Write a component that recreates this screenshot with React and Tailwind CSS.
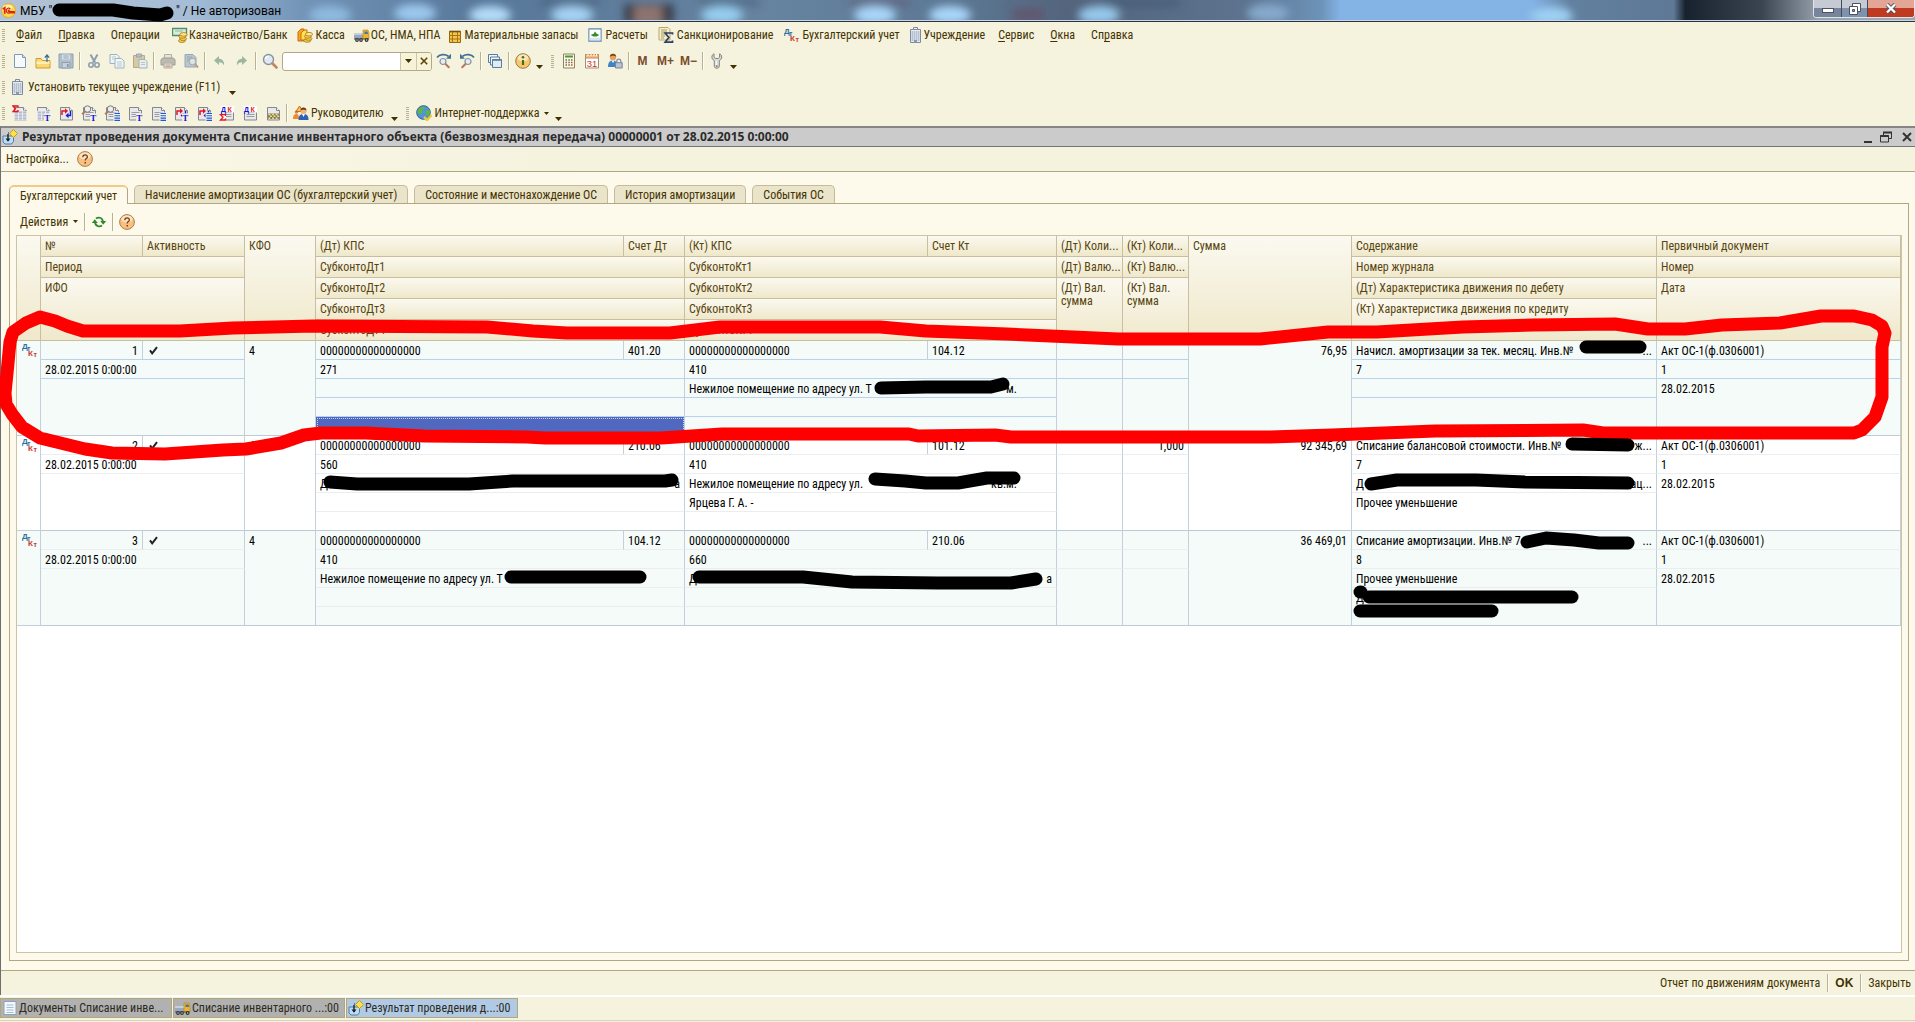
import React from "react";

const UI_FONT = "font-['Roboto_Condensed','Liberation_Sans',sans-serif]";

/* ---------- Иконки ---------- */

function Icon({ children, className = "h-4 w-4", box = "0 0 16 16" }) {
  return (
    <svg viewBox={box} className={`shrink-0 ${className}`} fill="none" aria-hidden="true">
      {children}
    </svg>
  );
}

function Logo1C() {
  return (
    <Icon className="h-[15px] w-[15px]">
      <circle cx="8" cy="8" r="7.5" fill="#fbd94b" stroke="#e0a92a" />
      <ellipse cx="7" cy="4.5" rx="5" ry="2.6" fill="#fff2a8" />
      <path d="M2 6.5 4 5v6.500" stroke="#d8231b" strokeWidth="1.8" />
      <path d="M10 6.2A2.6 2.6 0 1 0 9 10.6h6M9.4 8.2a.8.8 0 1 0-.6 1h6" stroke="#d8231b" strokeWidth="1.3" />
    </Icon>
  );
}

function Coins({ x = 6, y = 5 }) {
  return (
    <g transform={`translate(${x} ${y})`} fill="#f7cf4a" stroke="#a8741a" strokeWidth=".8">
      <ellipse cx="3.4" cy="8.6" rx="3.4" ry="1.7" />
      <ellipse cx="4.6" cy="6.6" rx="3.4" ry="1.7" />
      <ellipse cx="3.8" cy="4.4" rx="3.4" ry="1.7" />
      <ellipse cx="5" cy="2.2" rx="3.6" ry="1.8" fill="#fde98a" />
    </g>
  );
}

function BankIcon() {
  return (
    <Icon>
      <path d="M.5 1.5h14v7H.5z" fill="#dcebdc" stroke="#4f8f68" strokeWidth="1.4" />
      <path d="M3 4h8" stroke="#8fb89c" />
      <Coins x={6.5} y={5.2} />
    </Icon>
  );
}

function CashIcon() {
  return (
    <Icon>
      <path d="M1 14V5l3-3h3v12z" fill="#f6a623" stroke="#c76a10" />
      <path d="M4 13V6l3-3h3v10z" fill="#fde24f" stroke="#c76a10" />
      <Coins x={7} y={5} />
    </Icon>
  );
}

function TruckIcon() {
  return (
    <Icon>
      <path d="M0 6h9v6H0z" fill="#9aa9bd" />
      <path d="M0 6h9v2H0z" fill="#c6d0dd" />
      <path d="M9 3h5l1 3v6H9z" fill="#edb52e" stroke="#b88213" strokeWidth=".6" />
      <path d="M10.5 4.4h3l.6 2.6h-3.6z" fill="#4a74a8" />
      <path d="M0 11.5h15v1H0z" fill="#555" />
      <circle cx="3" cy="13" r="1.9" fill="#333" />
      <circle cx="7" cy="13" r="1.9" fill="#333" />
      <circle cx="12.6" cy="13" r="1.9" fill="#333" />
      <path d="M3 13h.1M7 13h.1M12.6 13h.1" stroke="#ccc" strokeLinecap="round" strokeWidth="1.4" />
    </Icon>
  );
}

function CrateIcon() {
  return (
    <Icon className="h-4 w-3" box="0 0 12 16">
      <path d="M.5 4.5h11v11H.5z" fill="#f3c64a" stroke="#9a6510" />
      <path d="M3.5 4.5v11M8.5 4.5v11M.5 8.5h11M.5 12h11" stroke="#a8741a" />
      <path d="M.5 4.5h11" stroke="#7a4d08" strokeWidth="1.6" />
    </Icon>
  );
}

function CalcDocIcon() {
  return (
    <Icon className="h-[14px] w-[14px]">
      <path d="M1 1h14v14H1z" fill="#fff" stroke="#5f86ac" strokeWidth="1.2" />
      <path d="M2 11h12v3H2z" fill="#d7e6f4" />
      <path d="M3 8l3.5-1.5L8 4l2 2.5L13 8l-3 1.6H6z" fill="#3c8a2a" />
    </Icon>
  );
}

function SanctionIcon() {
  return (
    <Icon>
      <path d="M1 .5h9l2 2V13H1z" fill="#f5eec8" stroke="#b8a86a" />
      <path d="M3 3h6M3 5h6M3 7h4M3 9h4M3 11h3" stroke="#a89a62" />
      <path d="M14.5 7.5v-1.5H7.2l3.6 4.5-3.6 4.6h7.3v-1.6" stroke="#2d3f63" strokeWidth="1.7" />
    </Icon>
  );
}

function DtKtIcon() {
  return (
    <svg viewBox="0 0 16 16" className="h-4 w-4 shrink-0" fontWeight="bold" fontFamily="Liberation Sans" aria-hidden="true">
      <text x="0" y="7" fontSize="8" fill="#2f6f9e">Д</text>
      <text x="5" y="8.5" fontSize="7" fill="#2f6f9e">т</text>
      <text x="6" y="14" fontSize="8" fill="#c63a2f">К</text>
      <text x="11.5" y="15" fontSize="7" fill="#c63a2f">т</text>
    </svg>
  );
}

function BuildingIcon() {
  return (
    <Icon className="h-4 w-[11px]" box="0 0 11 16">
      <path d="M3.5 2.5v-2h4v2" stroke="#7d8b9d" />
      <path d="M.5 2.5h10v13H.5z" fill="#e9eef5" stroke="#7d8b9d" />
      <path d="M2.5 4v10M4.5 4v10M6.5 4v10M8.5 4v10" stroke="#a9b6c8" strokeWidth=".7" />
      <path d="M1 5h9M1 7h9M1 9h9M1 11h9M1 13h9" stroke="#a9b6c8" strokeWidth=".7" />
      <path d="M4 13h3v2.5H4z" fill="#8a98ab" />
    </Icon>
  );
}

function NewIcon() {
  return (
    <Icon>
      <path d="M2.5 1.5h8l3 3v10h-11z" fill="#f6fafd" stroke="#7d9bb8" />
      <path d="M10.5 1.5v3h3" fill="#cfe0ee" stroke="#7d9bb8" />
    </Icon>
  );
}

function OpenIcon() {
  return (
    <Icon>
      <path d="M1 5.5h5l1.5 2H15v7.5H1z" fill="#f9d873" stroke="#cf9b34" />
      <path d="M1.5 8.5h13V11h-13z" fill="#fdeeb4" />
      <path d="M12 9V2.5M9.8 4.6 12 2l2.2 2.6" stroke="#3b6a8f" strokeWidth="1.2" />
    </Icon>
  );
}

function SaveIcon() {
  return (
    <Icon>
      <path d="M1 1h14v14H1z" fill="#b1bfcb" stroke="#8ea0af" />
      <path d="M4 1.5h8v5H4z" fill="#d5dde3" />
      <path d="M4 9.5h8V15H4z" fill="#c6d0d8" stroke="#8ea0af" />
      <path d="M5.5 3h5M5.5 5h5" stroke="#98a9b8" />
      <path d="M9 11h1.6v3H9z" fill="#8496a6" />
    </Icon>
  );
}

function CutIcon() {
  return (
    <Icon>
      <path d="M4.5 1.5 9 9.5M11.5 1.5 7 9.5" stroke="#8d9faf" strokeWidth="2" />
      <circle cx="5" cy="12" r="2.2" stroke="#8d9faf" strokeWidth="1.6" />
      <circle cx="11" cy="12" r="2.2" stroke="#8d9faf" strokeWidth="1.6" />
    </Icon>
  );
}

function CopyIcon() {
  return (
    <Icon>
      <path d="M1 1.5h7l2 2v7H1z" fill="#eef3f3" stroke="#9fb4c2" />
      <path d="M6 5.5h6.500l2.500 2.500v7H6z" fill="#f1f6f6" stroke="#9fb4c2" />
      <path d="M3 4h4M3 6h2.5M8 9h5M8 11h5M8 13h5" stroke="#b9c8d0" />
    </Icon>
  );
}

function PasteIcon() {
  return (
    <Icon>
      <path d="M1.5 2.5h11v12h-11z" fill="#d6c9a4" stroke="#b5aa8a" />
      <path d="M4.5 1h5v3h-5z" fill="#b4bfc6" stroke="#98a5ad" />
      <path d="M7 6.5h6l2 2v6.500H7z" fill="#e9eeee" stroke="#9fb0bb" />
      <path d="M9 9.5h4M9 11.5h4" stroke="#b7c4cc" />
    </Icon>
  );
}

function PrintIcon() {
  return (
    <Icon>
      <path d="M4.5 1.5h7V6h-7z" fill="#e3e3dc" stroke="#b3b1a4" />
      <path d="M1 6.5 3 5h10l2 1.5V12H1z" fill="#bdbab1" stroke="#9f9d94" />
      <path d="M4 10h8v5H4z" fill="#e5ddd0" stroke="#b0aca0" />
      <path d="M5.5 12h5M5.5 13.5h5" stroke="#c2a99a" />
    </Icon>
  );
}

function PreviewIcon() {
  return (
    <Icon>
      <path d="M2 1.5h8l3 3v9.5H2z" fill="#b9c6d0" stroke="#98a9b6" />
      <path d="M4 4h5M4 6h4M4 8h3" stroke="#94a6b4" />
      <circle cx="9.5" cy="8.5" r="3.3" fill="#dbe3e6" stroke="#a4a8a8" />
      <path d="m12 11 3 3.5" stroke="#c39d8b" strokeWidth="2" />
    </Icon>
  );
}

function UndoIcon({ flip }) {
  return (
    <Icon className={flip ? "h-4 w-4 -scale-x-100" : "h-4 w-4"}>
      <path d="M3 7.5 8 3v2.8c3.6.2 5.5 2.7 5 6.7-1-2.3-2.5-3.2-5-3.2V12z" fill="#9db6a0" />
    </Icon>
  );
}

function FindIcon() {
  return (
    <Icon>
      <circle cx="6.5" cy="6.5" r="5" fill="#dfe9f5" stroke="#8793a0" strokeWidth="1.4" />
      <path d="M3.5 6a3 3 0 0 1 3-2.6" stroke="#fff" strokeWidth="1.4" />
      <path d="m10.5 10.5 4 4" stroke="#c58468" strokeWidth="2.6" strokeLinecap="round" />
    </Icon>
  );
}

function FindStepIcon({ flip }) {
  return (
    <Icon className={flip ? "h-4 w-4 -scale-x-100" : "h-4 w-4"}>
      <path d="M1 4.5C3.5 1 9 .8 12.5 3.2" stroke="#3f7395" strokeWidth="1.7" />
      <path d="M15 .8v5H10z" fill="#3f7395" />
      <circle cx="7" cy="8.5" r="3" fill="#e4ecf5" stroke="#8793a0" strokeWidth="1.2" />
      <path d="m9.8 11.3 3 3" stroke="#b87660" strokeWidth="2" strokeLinecap="round" />
    </Icon>
  );
}

function WindowsIcon() {
  return (
    <Icon>
      <path d="M1.5 1.5h9v8h-9z" fill="#f3f7fa" stroke="#577f9d" />
      <path d="M3.5 4h9v8h-9z" fill="#f3f7fa" stroke="#577f9d" />
      <path d="M5.5 6.5h9v8h-9z" fill="#e2ebf3" stroke="#577f9d" />
      <path d="M5.5 7h9" stroke="#577f9d" strokeWidth="1.6" />
    </Icon>
  );
}

function InfoIcon() {
  return (
    <Icon>
      <circle cx="8" cy="8" r="7.3" fill="#fbc568" stroke="#9a7a4a" />
      <ellipse cx="8" cy="5" rx="5.2" ry="3.4" fill="#fde6b5" />
      <path d="M8 7v5" stroke="#3b7427" strokeWidth="2.2" />
      <circle cx="8" cy="4.2" r="1.3" fill="#3b7427" />
    </Icon>
  );
}

function HelpIcon() {
  return (
    <Icon>
      <circle cx="8" cy="8" r="7.4" fill="#f9bf7c" stroke="#a98050" />
      <ellipse cx="8" cy="5" rx="5.6" ry="3.6" fill="#fde3c2" />
      <path d="M5.8 6.2c0-3 4.6-2.9 4.6-.3 0 1.7-2.2 1.7-2.2 3.5" stroke="#6d4320" strokeWidth="1.3" />
      <path d="M7.5 11H9v1.5H7.500z" fill="#6d4320" />
    </Icon>
  );
}

function CalculatorIcon() {
  return (
    <Icon>
      <path d="M2.5 1h11v14h-11z" fill="#fbf6dd" stroke="#8a8468" />
      <path d="M4 2.5h8v2H4z" fill="#4a9a3c" />
      <path d="M4.500 7h1.500M7.300 7h1.500M10 7h1.500M4.500 9.500h1.500M7.300 9.500h1.500M4.500 12h1.500M7.300 12h1.500" stroke="#6c6a5a" strokeWidth="1.4" />
      <path d="M10 9.500h1.500M10 12h1.500" stroke="#d14a2e" strokeWidth="1.4" />
    </Icon>
  );
}

function CalendarIcon() {
  return (
    <Icon>
      <path d="M1.500 1.500h13v13.500h-13z" fill="#fff" stroke="#9c8f7c" />
      <path d="M1.500 1.500h13V5h-13z" fill="#f8bd84" stroke="#c08a5a" />
      <path d="M4 .5V3M7 .5V3M10 .5V3M12.500.5V3" stroke="#fff" />
      <text x="2.800" y="13.600" fontSize="9.500" fill="#e0301e" fontFamily="Liberation Sans">31</text>
    </Icon>
  );
}

function UserLockIcon() {
  return (
    <Icon>
      <circle cx="6" cy="4" r="3.2" fill="#e9a25a" />
      <path d="M2.8 3.8C2.8-.2 9.2-.2 9.2 3.8 7.500 2.4 4.500 2.4 2.8 3.8z" fill="#7a4a18" />
      <path d="M1 14c0-5 2-6.500 5-6.500s4 1.500 4 6.500z" fill="#3f83c6" />
      <path d="M4.500 7.500h3L6 10z" fill="#fff" />
      <path d="M9.8 10V8.2a2 2 0 0 1 4 0V10" stroke="#8590a0" strokeWidth="1.3" />
      <path d="M8.500 9.700h6.700V15H8.500z" fill="#b9c4d2" stroke="#78859a" />
    </Icon>
  );
}

function WrenchIcon() {
  return (
    <Icon>
      <path d="M5 .8C2.300 2 2 6 5.300 7.600V13.200c0 2.700 5 2.700 5 0V7.600C13.600 6 13.300 2 10.600.8V4.300L9.200 5.500H6.400L5 4.300z" fill="#dcdcd8" stroke="#83837f" />
      <path d="M7.200 8v4" stroke="#fff" />
      <circle cx="7.800" cy="13.200" r="1" fill="#83837f" />
    </Icon>
  );
}

/* Бланк отчёта; mark задаёт рисунок на листе, letter — значок в углу */
function ReportIcon({ mark, lens, letter, dense }) {
  return (
    <Icon>
      <path d="M2.500 2.500h9l3 3V15h-12z" fill="#e9e9ec" stroke="#85878f" />
      <path d="M11.500 2.500v3h3" fill="#fff" stroke="#85878f" />
      {!dense && <path d="M4.500 7.500h8M4.500 9.500h8M4.500 11.500h8" stroke="#9b9da4" />}
      {mark === "grid" && (
        <path d="M2.500 6h12v9h-12zM6.500 6v9M10.500 6v9M2.500 9h12M2.500 12h12" fill="#b3bacb" stroke="#f2f3f7" strokeWidth=".8" />
      )}
      {mark === "check" && (
        <>
          <path d="M3 8.500h11V14H3z" fill="#8a7f4a" />
          <path d="M3.500 9.500H14M5 11.300h9M3.500 13.200H14" stroke="#efe39a" strokeWidth="1.4" strokeDasharray="1.8 1.8" />
        </>
      )}
      {mark === "swap" && (
        <>
          <path d="M4 10V6h3.500" stroke="#e4151b" strokeWidth="1.5" />
          <path d="M7 3.300 10 6 7 8.700z" fill="#e4151b" />
          <path d="M12.500 6v4.500H10" stroke="#1b1bd0" strokeWidth="1.5" />
          <path d="M10.500 7.800 7.500 10.500l3 2.700z" fill="#1b1bd0" />
        </>
      )}
      {mark === "dk" && (
        <>
          <path d="M2 1h13v6.500H2z" fill="#fff" />
          <text x="2" y="7" fontSize="7" fontWeight="bold" fill="#1414d8" fontFamily="Liberation Sans">Д</text>
          <text x="8.500" y="7" fontSize="7" fontWeight="bold" fill="#e4151b" fontFamily="Liberation Sans">К</text>
        </>
      )}
      {lens && (
        <>
          <circle cx="6.500" cy="4" r="3.2" fill="#e6eff7" stroke="#8a7a68" />
          <path d="M4.200 6.300 1.200 9.300" stroke="#b07a58" strokeWidth="2" />
        </>
      )}
      {letter === "T" && (
        <>
          <path d="M9 8.500h7V16H9z" fill="#f5f2de" />
          <text x="9.300" y="15.800" fontSize="9" fontWeight="bold" fill="#1414e0" fontFamily="Liberation Serif">T</text>
        </>
      )}
      {letter === "L" && (
        <>
          <path d="M9.500 7.500H16V16H9.500z" fill="#f5f2de" />
          <path d="M10.500 8.500H16M10.500 10.800H16M10.500 13.100H16M10.500 15.400H16" stroke="#1b5ae0" strokeWidth="1.1" />
        </>
      )}
      {letter === "S" && <path d="M6 2.500V1H1l2.500 2.700L1 6.500h5V5" stroke="#e4151b" strokeWidth="1.3" />}
      {letter === "B" && (
        <>
          <path d="M1 9h6v7H1z" fill="#fff" />
          <path d="M6.500 11V9.600h-5L4 12.300 1.500 15h5v-1.400" stroke="#e4151b" strokeWidth="1.3" />
        </>
      )}
    </Icon>
  );
}

function ManagerIcon() {
  return (
    <Icon>
      <circle cx="3.5" cy="7" r="1.8" fill="#d98c4a" />
      <path d="M0 14c0-4 1.500-5 3.500-5S6 11 6 14z" fill="#ef8b2c" />
      <path d="M6.500 1 10 6.500H3z" fill="#f6c74a" stroke="#d0641e" />
      <circle cx="10.500" cy="6" r="3" fill="#efb27a" />
      <path d="M7.500 5.500c0-4 6-4 6 0-2-1.200-4-1.200-6 0z" fill="#5a3412" />
      <path d="M5.500 15c0-4.800 2-6 5-6s5 1.200 5 6z" fill="#2f62b0" />
      <path d="M9 9h3l-1.500 3z" fill="#fff" />
    </Icon>
  );
}

function GlobeIcon() {
  return (
    <Icon>
      <circle cx="7.500" cy="7.500" r="6.800" fill="#4f93d8" stroke="#2d5f93" />
      <path d="M3 3.500c2-2 5-2 6-1.300C8.500 4.500 6 4.500 6.500 7S3 9 1.500 8c-.5-2 .5-3.500 1.500-4.500zM9.500 6l4-1c1 2 .5 4.500-1 6-2-.5-3.500-3-3-5z" fill="#5fb548" />
      <path d="m8 12 3 3 4.500-5" stroke="#e8c93c" strokeWidth="2.5" />
    </Icon>
  );
}

function ResultIcon() {
  return (
    <Icon>
      <path d="M1 7h10.500v5.500l-2 2.500H3l-2-2z" fill="#c2dcef" stroke="#4b7fa6" />
      <path d="M6 5v7" stroke="#16222e" strokeWidth="1.4" />
      <path d="M3.500 9.500h5L6 12.800z" fill="#16222e" />
      <path d="M6 4h3" stroke="#16222e" strokeDasharray="1 1" />
      <path d="m11.500.5 4 4-4 4-4-4z" fill="#fbe14a" stroke="#c59a20" />
    </Icon>
  );
}

function ListIcon() {
  return (
    <Icon>
      <path d="M2 1.500h12v13H2z" fill="#f3f8fc" stroke="#8aa3ba" />
      <path d="M4.500 5h7M4.500 7.500h7M4.500 10h7M4.500 12.500h7" stroke="#a6bccf" />
    </Icon>
  );
}

function RefreshIcon() {
  return (
    <Icon>
      <path d="M5 4.500c2-1.500 6-1.500 7 3M11 11.500c-2 1.500-6 1.500-7-3" stroke="#2f8a2a" strokeWidth="1.800" />
      <path d="M.8 9h6L3.800 5.200zM9.200 7h6l-3 3.800z" fill="#2f8a2a" />
    </Icon>
  );
}

function CheckMark() {
  return (
    <Icon className="h-[9px] w-[9px]" box="0 0 9 9">
      <path d="m1 4.300 2.200 3L8 1.200" stroke="#222" strokeWidth="2" />
    </Icon>
  );
}

/* ---------- Элементы панелей ---------- */

function Grip() {
  return (
    <span className="mr-[3px] h-[13px] w-[3px] shrink-0 bg-[repeating-linear-gradient(#b9b28c_0_1px,transparent_1px_2px)]" />
  );
}

function Sep() {
  return (
    <span className="mr-px ml-[2px] h-[18px] w-[2px] shrink-0 border-l border-[#b9b28f] bg-[#fffef6]" />
  );
}

function Caret({ low }) {
  return (
    <svg viewBox="0 0 7 4" className={`h-1 w-[7px] shrink-0 ${low ? "mt-3" : ""}`} aria-hidden="true">
      <path d="M0 0h7L3.500 4z" fill="#3f3000" />
    </svg>
  );
}

function Tool({ label, children }) {
  return (
    <button type="button" aria-label={label} className="flex h-5 w-[23px] shrink-0 items-center justify-center">
      {children}
    </button>
  );
}

function Toolbar({ children }) {
  return <div className="flex h-[26px] items-center pl-[2px]">{children}</div>;
}

const menu = [
  { hot: "Ф", rest: "айл" },
  { hot: "П", rest: "равка" },
  { rest: "Операции" },
  { icon: BankIcon, rest: "Казначейство/Банк", tight: true },
  { icon: CashIcon, rest: "Касса" },
  { icon: TruckIcon, rest: "ОС, НМА, НПА", tight: true },
  { icon: CrateIcon, rest: "Материальные запасы" },
  { icon: CalcDocIcon, rest: "Расчеты" },
  { icon: SanctionIcon, rest: "Санкционирование" },
  { icon: DtKtIcon, rest: "Бухгалтерский учет" },
  { icon: BuildingIcon, rest: "Учреждение" },
  { hot: "С", rest: "ервис" },
  { hot: "О", rest: "кна" },
  { pre: "Сп", hot: "р", rest: "авка" },
];

function MenuItem({ item }) {
  const ItemIcon = item.icon;
  const spacing = !ItemIcon ? "px-2" : item.tight ? "gap-px px-1" : "gap-[3px] px-[5px]";
  return (
    <button type="button" className={`flex h-5 items-center whitespace-nowrap ${spacing}`}>
      {ItemIcon && <ItemIcon />}
      <span>
        {item.pre}
        {item.hot && <span className="underline underline-offset-2">{item.hot}</span>}
        {item.rest}
      </span>
    </button>
  );
}

/* ---------- Заголовок окна ---------- */

const glows = [
  [330, 15, "#8fb9e0"], [415, 13, "#9cc8ee"], [490, 15, "#b4dcf8"], [572, 15, "#a5d2f4"],
  [722, 15, "#96cdf0"], [875, 15, "#a9d6fa"], [950, 15, "#a9d6fa"], [1099, 15, "#96c8ec"],
  [1268, 13, "#86a9cc"], [1552, 16, "#9ed0f4"],
];

function TitleBar() {
  return (
    <header className="relative flex h-[22px] items-center border-b border-[#2b3342] bg-[#66839f] pl-px">
      <svg
        viewBox="0 0 1915 21"
        preserveAspectRatio="none"
        className="absolute inset-0 h-full w-full"
        aria-hidden="true"
      >
        <defs>
          <linearGradient id="glass">
            <stop offset="0" stopColor="#b3c2d3" />
            <stop offset=".1" stopColor="#a5bdd6" />
            <stop offset=".16" stopColor="#7193b6" />
            <stop offset=".25" stopColor="#58789a" />
            <stop offset=".4" stopColor="#66839f" />
            <stop offset=".5" stopColor="#5c7894" />
            <stop offset=".56" stopColor="#53647c" />
            <stop offset=".65" stopColor="#5d738f" />
            <stop offset=".69" stopColor="#6d93b8" />
            <stop offset=".7" stopColor="#84b3e6" />
            <stop offset=".8" stopColor="#84b3e6" />
            <stop offset=".82" stopColor="#62809f" />
            <stop offset=".874" stopColor="#5e7896" />
            <stop offset=".88" stopColor="#18222e" />
            <stop offset=".92" stopColor="#3a4551" />
            <stop offset=".95" stopColor="#97a2ad" />
            <stop offset="1" stopColor="#a0aab6" />
          </linearGradient>
          <filter id="soft" x="-50%" y="-50%" width="200%" height="200%">
            <feGaussianBlur stdDeviation="4" />
          </filter>
        </defs>
        <rect width="1915" height="21" fill="url(#glass)" />
        <g filter="url(#soft)">
          <path d="M624 4h50v20h-50z" fill="#3b3f4c" />
          <path d="M634 6h28v18h-28z" fill="#8f736f" />
          <path d="M1012 8h32v14h-32zM850 0h60v5h-60z" fill="#64506a" opacity=".7" />
          <path d="M1100 0h80v6h-80zM700 0h60v5h-60zM540 0h60v5h-60z" fill="#3d556d" opacity=".7" />
          {glows.map(([x, y, fill]) => (
            <ellipse key={x} cx={x} cy={y} rx="21" ry="9" fill={fill} />
          ))}
        </g>
        <path d="M0 20.500h1915" stroke="#c9d6e4" />
      </svg>
      <div className="relative flex flex-1 items-center gap-1 font-['Roboto',sans-serif] text-[12px] leading-[16px] text-black">
        <Logo1C />
        <span className="w-[152px] overflow-hidden whitespace-nowrap">МБУ "</span>
        <span className="whitespace-nowrap">" / Не авторизован</span>
      </div>
      <div className="relative flex h-[18px] self-start overflow-hidden rounded-b border border-t-0 border-[#dfe5ec] bg-[#4a5563]">
        <button type="button" aria-label="Свернуть" className="flex w-7 items-center justify-center border-r border-[#414a58] bg-linear-to-b from-[#c6cbd3] from-45% to-[#76859a] to-50%">
          <span className="mt-1 h-[5px] w-3 border border-[#4c5260] bg-white" />
        </button>
        <button type="button" aria-label="Развернуть" className="flex w-[26px] items-center justify-center border-r border-[#414a58] bg-linear-to-b from-[#c6cbd3] from-45% to-[#7f92ab] to-50%">
          <Icon className="h-3 w-3" box="0 0 12 12">
            <path d="M3.500.5h8v8h-8z" fill="#fff" stroke="#4c5260" />
            <path d="M.5 3.500h8v8h-8z" fill="#fff" stroke="#4c5260" />
            <path d="M3.500 6.500h2v2h-2z" fill="#8797ad" stroke="#4c5260" />
          </Icon>
        </button>
        <button type="button" aria-label="Закрыть окно" className="flex w-[46px] items-center justify-center bg-linear-to-b from-[#e2a596] from-45% to-[#bf3a20] to-50%">
          <Icon className="h-[11px] w-3" box="0 0 12 11">
            <path d="m2 1.500 8 8M10 1.500l-8 8" stroke="#4c5260" strokeWidth="4" />
            <path d="m2 1.500 8 8M10 1.500l-8 8" stroke="#fff" strokeWidth="2.4" />
          </Icon>
        </button>
      </div>
    </header>
  );
}

/* ---------- Таблица проводок ---------- */

const columns = [
  "w-6", "w-[102px]", "w-[102px]", "w-[71px]", "w-[308px]", "w-[61px]", "w-[243px]",
  "w-[129px]", "w-[66px]", "w-[66px]", "w-[163px]", "w-[305px]", "",
];

const headRows = [
  [
    { t: "", rows: 5 }, { t: "№" }, { t: "Активность" }, { t: "КФО", rows: 5 }, { t: "(Дт) КПС" },
    { t: "Счет Дт" }, { t: "(Кт) КПС" }, { t: "Счет Кт" }, { t: "(Дт) Коли..." }, { t: "(Кт) Коли..." },
    { t: "Сумма", rows: 5 }, { t: "Содержание" }, { t: "Первичный документ" },
  ],
  [
    { t: "Период", cols: 2 }, { t: "СубконтоДт1", cols: 2 }, { t: "СубконтоКт1", cols: 2 },
    { t: "(Дт) Валю..." }, { t: "(Кт) Валю..." }, { t: "Номер журнала" }, { t: "Номер" },
  ],
  [
    { t: "ИФО", cols: 2, rows: 3 }, { t: "СубконтоДт2", cols: 2 }, { t: "СубконтоКт2", cols: 2 },
    { t: "(Дт) Вал. сумма", wrap: true, rows: 3 }, { t: "(Кт) Вал. сумма", wrap: true, rows: 3 },
    { t: "(Дт) Характеристика движения по дебету" }, { t: "Дата", rows: 3 },
  ],
  [
    { t: "СубконтоДт3", cols: 2 }, { t: "СубконтоКт3", cols: 2 },
    { t: "(Кт) Характеристика движения по кредиту", rows: 2 },
  ],
  [{ t: "СубконтоДт4", cols: 2 }, { t: "СубконтоКт4", cols: 2 }],
];

const KPS = "00000000000000000";
const ADDRESS = "Нежилое помещение по адресу ул. ";

const entries = [
  {
    n: 1, kfo: "4", current: true,
    dt: [KPS, "271", "", "", ""], dtAcc: "401.20",
    kt: [KPS, "410", <Split head={ADDRESS + "Т"} tail="м." short />, "", ""], ktAcc: "104.12",
    qty: "", sum: "76,95",
    text: [<Split head="Начисл. амортизации за тек. месяц. Инв.№" tail="..." />, "7", "", ""],
  },
  {
    n: 2, kfo: "4",
    dt: [KPS, "560", <Split head="Д" tail="а" />, "", ""], dtAcc: "210.06",
    kt: [KPS, "410", <Split head={ADDRESS} tail="кв.м." short />, "Ярцева Г. А. -", ""], ktAcc: "101.12",
    qty: "1,000", sum: "92 345,69",
    text: [
      <Split head="Списание балансовой стоимости. Инв.№" tail="ж..." />, "7",
      <Split head="Д" tail="ац..." />, "Прочее уменьшение",
    ],
  },
  {
    n: 3, kfo: "4",
    dt: [KPS, "410", ADDRESS + "Т", "", ""], dtAcc: "104.12",
    kt: [KPS, "660", <Split head="Д" tail="а" />, "", ""], ktAcc: "210.06",
    qty: "", sum: "36 469,01",
    text: [<Split head="Списание амортизации. Инв.№ 7" tail="..." />, "8", "Прочее уменьшение", "Д"],
  },
];

function Split({ head, tail, short }) {
  return (
    <span className={`flex justify-between ${short ? "w-[328px]" : ""}`}>
      <span>{head}</span>
      <span>{tail}</span>
    </span>
  );
}

function HeadCell({ cell }) {
  return (
    <th
      scope="col"
      colSpan={cell.cols}
      rowSpan={cell.rows}
      className="h-[21px] overflow-hidden border-r border-b border-[#c9bf9f] bg-linear-to-b from-[#fbf9f0] to-[#efe8ca] px-1 pt-1 text-left align-top font-normal text-[#584510]"
    >
      <div className={`leading-[13px] ${cell.wrap ? "" : "whitespace-nowrap"}`}>{cell.t}</div>
    </th>
  );
}

function Entry({ e }) {
  const cell =
    "h-[19px] overflow-hidden whitespace-nowrap border-r border-b border-r-[#c3d0da] px-1 pt-[3px] align-top leading-[14px]";
  const inner = e.current ? `${cell} border-b-[#b7d1ee]` : `${cell} border-b-[#ebedee]`;
  const last = `${cell} border-b-[#c0cad2]`;
  const row = e.n % 2 ? "bg-[#f5fbf8]" : "bg-white";

  return (
    <>
      <tr className={row}>
        <td rowSpan={5} className="overflow-hidden border-r border-b border-[#c3d0da] pt-px pl-[5px] align-top">
          <DtKtIcon />
        </td>
        <td className={`${inner} text-right`}>{e.n}</td>
        <td className={inner}>
          <span className="flex h-[13px] items-center pl-[2px]">
            <CheckMark />
          </span>
        </td>
        <td rowSpan={5} className={last}>{e.kfo}</td>
        <td className={inner}>{e.dt[0]}</td>
        <td className={inner}>{e.dtAcc}</td>
        <td className={inner}>{e.kt[0]}</td>
        <td className={inner}>{e.ktAcc}</td>
        <td className={inner} />
        <td className={`${inner} text-right`}>{e.qty}</td>
        <td rowSpan={5} className={`${last} text-right`}>{e.sum}</td>
        <td className={inner}>{e.text[0]}</td>
        <td className={inner}>Акт ОС-1(ф.0306001)</td>
      </tr>
      <tr className={row}>
        <td colSpan={2} className={inner}>28.02.2015 0:00:00</td>
        <td colSpan={2} className={inner}>{e.dt[1]}</td>
        <td colSpan={2} className={inner}>{e.kt[1]}</td>
        <td className={inner} />
        <td className={inner} />
        <td className={inner}>{e.text[1]}</td>
        <td className={inner}>1</td>
      </tr>
      <tr className={row}>
        <td colSpan={2} rowSpan={3} className={last} />
        <td colSpan={2} className={inner}>{e.dt[2]}</td>
        <td colSpan={2} className={inner}>{e.kt[2]}</td>
        <td rowSpan={3} className={last} />
        <td rowSpan={3} className={last} />
        <td className={inner}>{e.text[2]}</td>
        <td rowSpan={3} className={last}>28.02.2015</td>
      </tr>
      <tr className={row}>
        <td colSpan={2} className={inner}>{e.dt[3]}</td>
        <td colSpan={2} className={inner}>{e.kt[3]}</td>
        <td rowSpan={2} className={last}>{e.text[3]}</td>
      </tr>
      <tr className={row}>
        <td
          colSpan={2}
          className={`${last} ${e.current ? "bg-[#5068c0] outline outline-offset-[-2px] outline-dotted outline-[#c8d0ee]" : ""}`}
        />
        <td colSpan={2} className={last} />
      </tr>
    </>
  );
}

function EntriesTable() {
  return (
    <div className="flex-1 overflow-hidden border border-[#cdc4a6] bg-white">
      <table className="w-full table-fixed border-separate border-spacing-0 text-black">
        <colgroup>
          {columns.map((c, i) => (
            <col key={i} className={c} />
          ))}
        </colgroup>
        <thead>
          {headRows.map((cells, i) => (
            <tr key={i}>
              {cells.map((cell, j) => (
                <HeadCell key={j} cell={cell} />
              ))}
            </tr>
          ))}
        </thead>
        <tbody>
          {entries.map((e) => (
            <Entry key={e.n} e={e} />
          ))}
        </tbody>
      </table>
    </div>
  );
}

/* ---------- Пометки маркером поверх окна ---------- */

const redLoop =
  "M10 342 13 332 26 323 40 317 55 321 67 326 83 331 180 331 233 328 313 326 487 327 533 331 567 333 670 333 720 327 880 327 926 331 1007 334 1073 337 1118 339 1260 339 1328 332 1377 332 1463 327 1533 325 1615 324 1648 329 1685 329 1722 325 1780 323 1821 316 1854 316 1872 320 1882 326 1885 333 1882 347 1882 397 1875 417 1862 430 1854 433 1603 433 1583 430 1435 431 1332 435 1270 437 1011 437 995 435 918 436 909 434 722 434 661 438 545 438 527 437 424 436 366 433 321 433 304 435 281 443 246 449 223 450 165 454 112 453 85 449 40 438 22 427 12 414 6 404 5 393 8 363z";

const blackStrokes = [
  "M59 10 113 10 133 13 160 15 167 13",
  "M881 388 926 387 991 387 1003 384",
  "M1586 347H1640",
  "M330 482 357 484H469L513 481H665L672 480",
  "M875 479 905 481 926 483H958L987 478H1014",
  "M1572 444 1628 445",
  "M1371 484 1397 480H1476L1525 482 1628 483",
  "M511 577H640",
  "M699 577H803L852 582 938 583H1011L1036 579",
  "M1527 542 1546 538 1574 540 1599 543H1628",
  "M1360 592h1",
  "M1369 597H1572",
  "M1360 611H1492",
];

function Markup() {
  return (
    <svg
      viewBox="0 0 1915 1022"
      className="pointer-events-none absolute top-0 left-0 h-[1022px] w-[1915px]"
      fill="none"
      strokeLinecap="round"
      strokeLinejoin="round"
      aria-hidden="true"
    >
      <path d={redLoop} stroke="#ff0000" strokeWidth="13" />
      {blackStrokes.map((d) => (
        <path key={d} d={d} stroke="#000" strokeWidth="13" />
      ))}
    </svg>
  );
}

/* ---------- Вкладки и панель задач ---------- */

const tabs = [
  "Бухгалтерский учет",
  "Начисление амортизации ОС (бухгалтерский учет)",
  "Состояние и местонахождение ОС",
  "История амортизации",
  "События ОС",
];

const openWindows = [
  { icon: ListIcon, title: "Документы Списание инве..." },
  { icon: TruckIcon, title: "Списание инвентарного ...:00" },
  { icon: ResultIcon, title: "Результат проведения д...:00", active: true },
];

export default function App() {
  return (
    <div className={`relative flex min-h-screen flex-col overflow-hidden bg-[#f5f2de] text-[12px] leading-[14px] text-[#443300] ${UI_FONT}`}>
      <TitleBar />

      <nav>
        <Toolbar>
          <Grip />
          <div className="flex">
            {menu.map((item) => (
              <MenuItem key={item.rest} item={item} />
            ))}
          </div>
        </Toolbar>
      </nav>

      <Toolbar>
        <Grip />
        <Tool label="Новый"><NewIcon /></Tool>
        <Tool label="Открыть"><OpenIcon /></Tool>
        <Tool label="Сохранить"><SaveIcon /></Tool>
        <Sep />
        <Tool label="Вырезать"><CutIcon /></Tool>
        <Tool label="Копировать"><CopyIcon /></Tool>
        <Tool label="Вставить"><PasteIcon /></Tool>
        <Sep />
        <Tool label="Печать"><PrintIcon /></Tool>
        <Tool label="Просмотр"><PreviewIcon /></Tool>
        <Sep />
        <Tool label="Отменить"><UndoIcon /></Tool>
        <Tool label="Вернуть"><UndoIcon flip /></Tool>
        <Sep />
        <Tool label="Найти"><FindIcon /></Tool>
        <div className="ml-px flex h-[19px] w-[150px] overflow-hidden rounded-[3px] border border-[#b3a983] bg-white">
          <input type="text" aria-label="Поиск" className="min-w-0 flex-1 px-1 outline-none" />
          <button type="button" aria-label="История поиска" className="flex w-4 items-center justify-center border-l border-[#cfc7a4] bg-[#f7f2da]">
            <Caret />
          </button>
          <button type="button" aria-label="Очистить" className="flex w-[15px] items-center justify-center border-l border-[#cfc7a4] bg-[#f7f2da]">
            <Icon className="h-2 w-2" box="0 0 8 8">
              <path d="m.8.8 6.400 6.400M7.200.8.8 7.200" stroke="#5a4508" strokeWidth="1.6" />
            </Icon>
          </button>
        </div>
        <Tool label="Найти следующий"><FindStepIcon /></Tool>
        <Tool label="Найти предыдущий"><FindStepIcon flip /></Tool>
        <Sep />
        <Tool label="Окна"><WindowsIcon /></Tool>
        <Sep />
        <Tool label="Справка"><InfoIcon /></Tool>
        <span className="w-[2px]" />
        <Caret low />
        <span className="w-2" />
        <Grip />
        <Tool label="Калькулятор"><CalculatorIcon /></Tool>
        <Tool label="Календарь"><CalendarIcon /></Tool>
        <Tool label="Пользователь"><UserLockIcon /></Tool>
        <Sep />
        <div className="flex font-['Liberation_Sans',sans-serif] font-bold text-[#7b4a2a]">
          <button type="button" className="w-[23px]">M</button>
          <button type="button" className="w-[23px]">M+</button>
          <button type="button" className="w-[23px]">M−</button>
        </div>
        <Sep />
        <Tool label="Сервис"><WrenchIcon /></Tool>
        <span className="w-[2px]" />
        <Caret low />
      </Toolbar>

      <Toolbar>
        <Grip />
        <button type="button" className="flex items-center gap-[5px] px-1">
          <BuildingIcon />
          Установить текущее учреждение (F11)
        </button>
        <span className="w-[5px]" />
        <Caret low />
      </Toolbar>

      <Toolbar>
        <Grip />
        <Tool label="Оборотно-сальдовая ведомость"><ReportIcon mark="grid" letter="S" dense /></Tool>
        <Tool label="Шахматка"><ReportIcon mark="grid" letter="T" dense /></Tool>
        <Tool label="Обороты счета"><ReportIcon mark="swap" dense /></Tool>
        <Tool label="Анализ счета"><ReportIcon lens letter="T" /></Tool>
        <Tool label="Анализ субконто"><ReportIcon lens letter="L" /></Tool>
        <Tool label="Карточка счета"><ReportIcon letter="T" /></Tool>
        <Tool label="Карточка субконто"><ReportIcon letter="L" /></Tool>
        <Tool label="Обороты между счетами"><ReportIcon mark="swap" letter="T" dense /></Tool>
        <Tool label="Обороты между субконто"><ReportIcon mark="swap" letter="L" dense /></Tool>
        <Tool label="Сводные проводки"><ReportIcon mark="dk" letter="B" /></Tool>
        <Tool label="Отчет по проводкам"><ReportIcon mark="dk" /></Tool>
        <Tool label="Главная книга"><ReportIcon mark="check" dense /></Tool>
        <Sep />
        <button type="button" className="flex items-center gap-[2px] px-1">
          <ManagerIcon />
          Руководителю
        </button>
        <span className="w-1" />
        <Caret low />
        <span className="w-2" />
        <Grip />
        <button type="button" className="flex items-center gap-[2px] px-1">
          <GlobeIcon />
          Интернет-поддержка
          <svg viewBox="0 0 5 3" className="ml-[2px] h-[3px] w-[5px]" aria-hidden="true">
            <path d="M0 0h5L2.500 3z" fill="#3f3000" />
          </svg>
        </button>
        <span className="w-[2px]" />
        <Caret low />
      </Toolbar>

      {/* Окно результата проведения */}
      <main className="flex flex-1 flex-col border-t-2 border-l border-t-[#858585] border-l-[#6e6e6e]">
        <div className="flex h-[19px] items-center gap-1 border-b border-[#757575] bg-[#cbcbcb] pr-[3px] pl-px">
          <ResultIcon />
          <h1 className="flex-1 font-['Noto_Sans',sans-serif] text-[12px] font-bold whitespace-nowrap text-[#2b2b2b]">
            Результат проведения документа Списание инвентарного объекта (безвозмездная передача) 00000001 от 28.02.2015 0:00:00
          </h1>
          <div className="flex items-center gap-[6px] text-[#333]">
            <button type="button" aria-label="Свернуть">
              <Icon className="h-3 w-3" box="0 0 12 12"><path d="M2 11h8" stroke="currentColor" strokeWidth="2" /></Icon>
            </button>
            <button type="button" aria-label="Восстановить">
              <Icon className="h-3 w-3" box="0 0 12 12">
                <path d="M3.500 4V1.500h8v6H9" stroke="currentColor" />
                <path d="M3 1.500h9M.5 5h8" stroke="currentColor" strokeWidth="2" />
                <path d="M.5 4.500h8v6.500h-8z" stroke="currentColor" />
              </Icon>
            </button>
            <button type="button" aria-label="Закрыть окно" className="ml-1">
              <Icon className="h-[10px] w-[10px]" box="0 0 10 10"><path d="m1 1 8 8M9 1 1 9" stroke="currentColor" strokeWidth="2" /></Icon>
            </button>
          </div>
        </div>

        <div className="flex h-[25px] items-center gap-2 border-b border-[#b0a883] bg-linear-to-r from-[#fbf8e9] to-[#f5f2de] to-30% pl-[5px]">
          <button type="button">Настройка...</button>
          <button type="button" aria-label="Справка"><HelpIcon /></button>
        </div>

        <div className="flex flex-1 flex-col bg-[#fdfaeb] px-2 pt-[13px] pr-[6px] pb-[9px]">
          <div role="tablist" className="flex gap-[6px]">
            {tabs.map((tab, i) => (
              <button
                key={tab}
                type="button"
                role="tab"
                aria-selected={i === 0}
                className={
                  i === 0
                    ? "relative -mb-px h-[19px] rounded-t-[5px] border border-t-2 border-b-0 border-[#b0a883] border-t-[#f3c98a] bg-[#fdfaeb] px-[10px]"
                    : "h-[18px] rounded-t-[5px] border border-b-0 border-[#c4bb98] bg-[#eae4cb] px-[10px]"
                }
              >
                {tab}
              </button>
            ))}
          </div>

          <div className="flex flex-1 flex-col border border-[#b0a883] px-[6px] pb-[7px]">
            <div className="flex h-[31px] items-center pt-1 pl-1">
              <button type="button" className="mr-1 flex items-center gap-[5px]">
                Действия
                <svg viewBox="0 0 5 3" className="h-[3px] w-[5px]" aria-hidden="true">
                  <path d="M0 0h5L2.500 3z" fill="#3f3000" />
                </svg>
              </button>
              <Sep />
              <Tool label="Обновить"><RefreshIcon /></Tool>
              <Sep />
              <Tool label="Справка"><HelpIcon /></Tool>
            </div>
            <EntriesTable />
          </div>
        </div>

        <div className="flex h-[25px] items-center justify-end gap-[5px] border-t border-[#b0a883] pr-1">
          <button type="button">Отчет по движениям документа</button>
          <Sep />
          <button type="button" className="font-['Liberation_Sans',sans-serif] text-[12px] font-bold">OK</button>
          <Sep />
          <button type="button">Закрыть</button>
        </div>
      </main>

      <footer className="border-t-2 border-white pt-px">
        <div className="flex gap-px">
          {openWindows.map((w) => (
            <button
              key={w.title}
              type="button"
              className={`flex h-5 w-[172px] items-center gap-px border border-[#b3a779] px-px whitespace-nowrap text-[#2e2a1c] ${
                w.active ? "bg-[#b0cae6]" : "bg-[#b1b1b1]"
              }`}
            >
              <w.icon />
              {w.title}
            </button>
          ))}
        </div>
        <div className="mt-[2px] h-[2px] border-t border-[#d9d3b8]" />
      </footer>

      <Markup />
    </div>
  );
}
